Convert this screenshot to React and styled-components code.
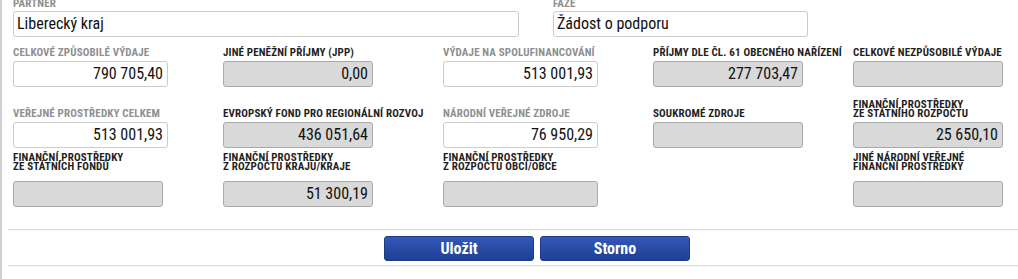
import React from "react";
import styled, { createGlobalStyle } from "styled-components";

const Global = createGlobalStyle`
  html, body { margin: 0; padding: 0; background: #fff; }
  body { font-family: "Roboto Condensed", "Liberation Sans Narrow", "DejaVu Sans Condensed", Roboto, sans-serif; font-stretch: condensed; }
`;

const Page = styled.div`
  width: 1018px;
  height: 279px;
  box-sizing: border-box;
  border-left: 2px solid #cfcfcf;
  overflow: hidden;
`;

const Form = styled.div`
  padding-left: 11px;
`;

const Row = styled.div`
  display: grid;
  grid-template-columns: ${(p) => p.$cols};
  height: ${(p) => p.$h}px;
  align-items: end;
`;

const Cell = styled.div`
  display: flex;
  flex-direction: column;
  justify-content: flex-end;
`;

const Label = styled.div`
  font-size: 11px;
  letter-spacing: 0.15px;
  line-height: ${(p) => p.$lh ?? 9}px;
  font-weight: 700;
  text-transform: uppercase;
  color: ${(p) => (p.$muted ? "#8f8f8f" : "#1f1f1f")};
  margin-bottom: ${(p) => p.$gap ?? 4}px;
  white-space: pre-line;
`;

const Field = styled.div`
  box-sizing: border-box;
  width: ${(p) => p.$w}px;
  height: 26px;
  border: 1px solid ${(p) => (p.$ro ? "#a9a9a9" : "#cccccc")};
  border-radius: 3px;
  background: ${(p) => (p.$ro ? "#d9d9d9" : "#ffffff")};
  color: #111;
  font-size: 16px;
  line-height: 24px;
  padding: 0 ${(p) => (p.$left ? 0 : 4)}px 0 ${(p) => (p.$left ? 3 : 0)}px;
  text-align: ${(p) => (p.$left ? "left" : "right")};
  white-space: nowrap;
`;

const Divider = styled.div`
  margin-left: 6px;
  height: 2px;
  border-top: 1px solid #dedede;
  border-bottom: 1px solid #f6f6f6;
  box-sizing: border-box;
`;

const Actions = styled.div`
  display: flex;
  gap: 6px;
  padding-left: 382px;
  margin: 5px 0 4px;
`;

const Button = styled.button`
  width: 150px;
  height: 25px;
  border: 1px solid #1c3a86;
  border-radius: 3px;
  background: linear-gradient(#3358b8, #1e3f95);
  color: #fff;
  font-family: inherit;
  font-stretch: condensed;
  font-weight: 700;
  font-size: 16px;
  padding: 0;
  cursor: pointer;
`;

const Spacer = styled.div`
  height: 22px;
`;

const COLS = "210px 220px 210px 200px 150px";

const F = ({ label, muted, value, ro, w, gap }) => (
  <Cell>
    {label != null && (
      <Label $muted={muted} $gap={gap}>
        {label}
      </Label>
    )}
    <Field $ro={ro} $w={w ?? (ro ? 150 : 155)}>
      {value}
    </Field>
  </Cell>
);

export default function App() {
  return (
    <>
      <Global />
      <Page>
        <Form>
          <Row $cols="540px 255px" $h={37}>
            <Cell>
              <Label $muted $gap={3} $lh={8}>Partner</Label>
              <Field $w={506} $left>Liberecký kraj</Field>
            </Cell>
            <Cell>
              <Label $muted $gap={3} $lh={8}>Fáze</Label>
              <Field $w={255} $left>Žádost o podporu</Field>
            </Cell>
          </Row>
          <Row $cols={COLS} $h={50}>
            <F label="Celkové způsobilé výdaje" muted value="790 705,40" />
            <F label="Jiné peněžní příjmy (JPP)" ro value="0,00" />
            <F label="Výdaje na spolufinancování" muted value="513 001,93" />
            <F label="Příjmy dle čl. 61 obecného nařízení" ro value="277 703,47" />
            <F label="Celkové nezpůsobilé výdaje" ro value="" />
          </Row>
          <Row $cols={COLS} $h={61}>
            <F label="Veřejné prostředky celkem" muted value="513 001,93" />
            <F label="Evropský fond pro regionální rozvoj" ro value="436 051,64" />
            <F label="Národní veřejné zdroje" muted value="76 950,29" />
            <F label="Soukromé zdroje" ro value="" />
            <F label={"Finanční,prostředky\nze státního rozpočtu"} ro value="25 650,10" />
          </Row>
          <Row $cols={COLS} $h={59}>
            <F label={"Finanční,prostředky\nze státních fondů"} ro gap={10} value="" />
            <F label={"Finanční prostředky\nz rozpočtu kraju/kraje"} ro gap={10} value="51 300,19" />
            <F label={"Finanční prostředky\nz rozpočtu obcí/obce"} ro gap={10} value="" w={155} />
            <Cell />
            <F label={"Jiné národní veřejné\nfinanční prostředky"} ro gap={10} value="" />
          </Row>
        </Form>
        <Spacer />
        <Divider />
        <Actions>
          <Button>Uložit</Button>
          <Button>Storno</Button>
        </Actions>
        <Divider />
      </Page>
    </>
  );
}
